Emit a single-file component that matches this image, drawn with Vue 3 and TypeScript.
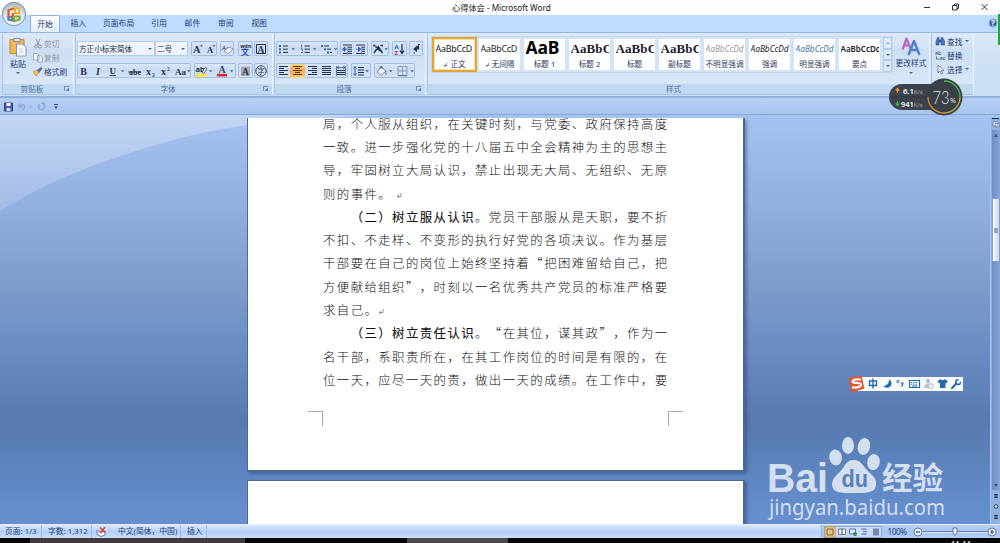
<script setup lang="ts">
import { h } from 'vue'

interface Shape {
  d?: string
  f?: string
  s?: string
  w?: number
  t?: string
  x?: number
  y?: number
  size?: number
  bold?: boolean
  italic?: boolean
  serif?: boolean
  under?: boolean
}
interface Tool { w: number; shapes: Shape[]; active?: boolean }
interface Box { gap: number; tools: Tool[] }

const ink = '#26324f'
const blue = '#3a66a8'

const Glyph = (props: { w: number; h: number; shapes: Shape[] }) =>
  h('svg', { width: props.w, height: props.h, viewBox: `0 0 ${props.w} ${props.h}` },
    props.shapes.map(p => p.t !== undefined
      ? h('text', {
          x: p.x, y: p.y, fill: p.f ?? ink, 'font-size': p.size ?? 9,
          'font-weight': p.bold ? 700 : 400,
          'font-style': p.italic ? 'italic' : 'normal',
          'text-decoration': p.under ? 'underline' : 'none',
          'font-family': p.serif ? '"Liberation Serif", serif' : '"Noto Sans", "Noto Sans CJK SC", sans-serif'
        }, p.t)
      : h('path', { d: p.d, fill: p.f ?? 'none', stroke: p.s ?? 'none', 'stroke-width': p.w ?? 1 })))
Glyph.props = ['w', 'h', 'shapes']

const drop = (x: number): Shape => ({ d: `M${x} 6.2h3.4l-1.7 2z`, f: '#4a5f8c' })
const T = (t: string, x: number, y: number, size: number, o: Partial<Shape> = {}): Shape => ({ t, x, y, size, ...o })
const lines = (x1: number, x2: number, ys: number[], s = ink): Shape =>
  ({ d: ys.map(y => `M${x1} ${y}H${x2}`).join(''), s })

const fontRow1: Box[] = [
  { gap: 3, tools: [
    { w: 13, shapes: [T('A', 2, 11, 10.5, { bold: true, serif: true }), { d: 'M9 4.5l1.5-2 1.5 2z', f: blue }] },
    { w: 13, shapes: [T('A', 3, 11, 8.5, { bold: true, serif: true }), { d: 'M8.5 3h3l-1.5 2z', f: blue }] }
  ] },
  { gap: 4, tools: [{ w: 14, shapes: [T('Aa', 1.5, 8, 7, { serif: true }), { d: 'M4 9l5-4 4 2-5 5z', f: '#f4f2f4', s: '#8088a8', w: .8 }] }] },
  { gap: 1, tools: [{ w: 15, shapes: [T('wén', 2.2, 5.5, 5.4, { bold: true }), T('文', 3, 12.8, 8, { f: '#2454b0', bold: true })] }] },
  { gap: 0, tools: [{ w: 14, shapes: [{ d: 'M2.5 2.5h9v9h-9z', s: ink }, T('A', 3.5, 10.5, 9.5, { bold: true, serif: true })] }] }
]
const fontRow2: Box[] = [
  { gap: 3, tools: [
    { w: 14, shapes: [T('B', 3.2, 10.8, 10, { bold: true, serif: true })] },
    { w: 14, shapes: [T('I', 5, 10.8, 10, { bold: true, italic: true, serif: true })] },
    { w: 21, shapes: [T('U', 4.5, 10, 9, { bold: true, serif: true, under: true }), drop(16)] },
    { w: 17, shapes: [T('abe', 3, 10.5, 8, { bold: true, serif: true }), { d: 'M2 8h13', s: ink, w: .9 }] },
    { w: 15, shapes: [T('x', 3, 10.5, 10, { bold: true, serif: true }), T('2', 9, 12.5, 5, { f: blue, bold: true })] },
    { w: 14, shapes: [T('x', 3, 10.5, 10, { bold: true, serif: true }), T('2', 9, 6.5, 5, { f: blue, bold: true })] },
    { w: 19, shapes: [T('Aa', 3, 10.8, 9, { bold: true, serif: true }), drop(15)] }
  ] },
  { gap: 2, tools: [
    { w: 21, shapes: [T('ab', 1.5, 8, 7.5, { bold: true }), { d: 'M8 8.5l3-5 2 1-3 5z', f: '#f4f4f4', s: ink, w: .7 }, { d: 'M2 9.7h10v3h-10z', f: '#f7e92e' }, drop(15)] },
    { w: 21, shapes: [T('A', 3.5, 9.3, 10, { bold: true, serif: true, f: '#28477e' }), { d: 'M2 9.9h10v2.5h-10z', f: '#e01f2a' }, drop(15)] }
  ] },
  { gap: 1, tools: [{ w: 15, shapes: [{ d: 'M3 2.5h9v9.5h-9z', f: '#a9a9ae' }, T('A', 4, 10.5, 9.5, { bold: true, serif: true })] }] },
  { gap: 0, tools: [{ w: 14, shapes: [{ d: 'M7 1.8a5.2 5.2 0 1 0 .01 0', s: ink, w: .9 }, T('字', 3.3, 10, 7.5)] }] }
]
const bullets: Shape[] = [{ d: 'M3 3h2v2h-2zM3 6.2h2v2h-2zM3 9.4h2v2h-2z', f: '#3968ad' }, lines(7, 12, [4, 7.2, 10.4])]
const paraRow1: Box[] = [
  { gap: 2, tools: [
    { w: 21, shapes: [...bullets, drop(15.5)] },
    { w: 21, shapes: [{ d: 'M4.5 2.5v3M4 6.5h1v2h1M4 10.5h2', s: '#3968ad', w: .9 }, lines(7.5, 13, [4, 7.2, 10.4]), drop(16)] },
    { w: 20, shapes: [{ d: 'M3 3h2v2h-2zM6 6.2h2v2h-2zM9 9.4h2v2h-2z', f: '#3968ad' }, lines(6, 11, [4]), lines(9, 13, [7.2]), lines(12, 14, [10.4]), drop(16)] }
  ] },
  { gap: 3, tools: [
    { w: 14, shapes: [lines(3, 12, [3, 11.5]), lines(8, 12, [5.2, 7.3, 9.4]), { d: 'M7 7.2H3.5M5 5l-2.5 2.2 2.5 2.3z', s: '#2e62ae', f: '#2e62ae', w: .8 }, { d: 'M7.5 2v11', s: '#7b8eb5', w: .7 }] },
    { w: 14, shapes: [lines(2, 11, [3, 11.5]), lines(8, 11, [5.2, 7.3, 9.4]), { d: 'M2 7.2h3.5M4.5 5l2.5 2.2-2.5 2.3z', s: '#2e62ae', f: '#2e62ae', w: .8 }, { d: 'M7.5 2v11', s: '#7b8eb5', w: .7 }] }
  ] },
  { gap: 3, tools: [{ w: 18, shapes: [{ d: 'M2 3.5h2.5M9.5 3.5h2.5M3 11L7.2 4.500 11.500 11M4.500 4.500l5 4.500', s: ink, w: 1.5 }, drop(13.5)] }] },
  { gap: 2, tools: [{ w: 15, shapes: [T('A', 2.5, 6.8, 6, { bold: true, f: '#2e62ae' }), T('Z', 2.5, 13, 6, { bold: true, f: '#a33846' }), { d: 'M10 2v9M8 8.7l2 3 2-3', s: ink, w: 1.2 }] }] },
  { gap: 0, tools: [{ w: 14, shapes: [{ d: 'M9.500 3v4H5.500M7.500 5L5 7l2.500 2z', s: ink, f: ink, w: 1.1 }, { d: 'M9 2.500h2M4.500 11h1.500', s: ink, w: 1.2 }] }] }
]
const ys = [2.5, 4.5, 6.5, 8.5, 10.5]
const paraRow2: Box[] = [
  { gap: 3, tools: [
    { w: 14, shapes: [lines(3, 12, [2.5, 6.5, 10.5]), lines(3, 8, [4.5, 8.5])] },
    { w: 15, active: true, shapes: [lines(3, 12, [2.5, 6.5, 10.5], '#5c3a18'), lines(5, 10, [4.5, 8.5], '#5c3a18')] },
    { w: 14, shapes: [lines(3, 12, [2.5, 6.5, 10.5]), lines(7, 12, [4.5, 8.5])] },
    { w: 15, shapes: [lines(3, 12, ys)] },
    { w: 14, shapes: [lines(3, 11, [6.5, 8.5, 10.5]), { d: 'M2.5 2v10M11.5 2v10M3 3.5h8M5 2l-2 1.5 2 1.5M9 2l2 1.5-2 1.5', s: '#385d9c', w: .8 }] }
  ] },
  { gap: 3, tools: [{ w: 20, shapes: [{ d: 'M4 2.5v9M2.5 4.5L4 2.5l1.5 2M2.5 9.5L4 11.5l1.5-2', s: '#2e62ae' }, lines(7, 13, [3.5, 6, 8.5, 11]), drop(14.5)] }] },
  { gap: 0, tools: [
    { w: 21, shapes: [{ d: 'M3 8l4-5 5 4-5 4.5z', f: '#f3f5f9', s: '#5b6d90', w: .8 }, { d: 'M6 5V2.5h2V5M12 7v4', s: '#5b6d90', w: .9 }, { d: 'M2 12h10v1h-10z', f: '#d9dfeb' }, drop(15)] },
    { w: 20, shapes: [{ d: 'M3 2.5h9v9h-9zM7.5 2.5v9M3 7h9', s: '#8495b8', w: .9 }, { d: 'M3 11.7h9', s: '#536894' }, drop(15.5)] }
  ] }
]

const tabs = [
  { label: '开始', active: true }, { label: '插入' }, { label: '页面布局' }, { label: '引用' },
  { label: '邮件' }, { label: '审阅' }, { label: '视图' }
]
const cards = [
  { s: 'AaBbCcD', n: '正文', mark: true, k: 'plain', active: true },
  { s: 'AaBbCcD', n: '无间隔', mark: true, k: 'plain' },
  { s: 'AaB', n: '标题 1', k: 'h1' },
  { s: 'AaBbC', n: '标题 2', k: 'h2' },
  { s: 'AaBbC', n: '标题', k: 'h2' },
  { s: 'AaBbC', n: '副标题', k: 'h2' },
  { s: 'AaBbCcDd', n: '不明显强调', k: 'subtle' },
  { s: 'AaBbCcDd', n: '强调', k: 'em' },
  { s: 'AaBbCcDd', n: '明显强调', k: 'strongem' },
  { s: 'AaBbCcDd', n: '要点', k: 'point' }
]
const doc: { b?: string; t: string; indent?: boolean; end?: boolean }[] = [
  { t: '局，个人服从组织，在关键时刻，与党委、政府保持高度' },
  { t: '一致。进一步强化党的十八届五中全会精神为主的思想主' },
  { t: '导，牢固树立大局认识，禁止出现无大局、无组织、无原' },
  { t: '则的事件。', end: true },
  { b: '（二）树立服从认识', t: '。党员干部服从是天职，要不折', indent: true },
  { t: '不扣、不走样、不变形的执行好党的各项决议。作为基层' },
  { t: '干部要在自己的岗位上始终坚持着“把困难留给自己，把' },
  { t: '方便献给组织”，时刻以一名优秀共产党员的标准严格要' },
  { t: '求自己。', end: true },
  { b: '（三）树立责任认识', t: '。“在其位，谋其政”，作为一', indent: true },
  { t: '名干部，系职责所在，在其工作岗位的时间是有限的，在' },
  { t: '位一天，应尽一天的责，做出一天的成绩。在工作中，要' }
]
</script>

<template>
  <div class="window">
    <header class="title">
      <span class="caption">心得体会 - Microsoft Word</span>
      <svg class="controls" width="76" height="15" viewBox="0 0 76 15" fill="none" stroke="#333" stroke-width="1">
        <path d="M0 7.500h6M30.500 5.500v-1.500h4v4.500h-1.500M28.500 5.500h4.500v4.500h-4.500zM57.500 4l6 6M63.500 4l-6 6" />
      </svg>
    </header>
    <svg class="orb" width="28" height="28" viewBox="0 0 28 28">
      <defs>
        <radialGradient id="orbFill" cx="50%" cy="70%" r="65%">
          <stop offset="0" stop-color="#fff" /><stop offset=".65" stop-color="#dde3ec" /><stop offset="1" stop-color="#a9b5c8" />
        </radialGradient>
      </defs>
      <circle cx="14" cy="14" r="11.700" fill="url(#orbFill)" stroke="#8794aa" />
      <g fill="none" stroke-width="2.200">
        <path d="M14 8.500L8.500 10v6.500L13 17v-4" stroke="#e0582b" />
        <path d="M15 7.500l4 1v5h-4z" stroke="#efb12e" />
        <path d="M8.500 16v3.500l4 .8v-3" stroke="#4a7fc8" />
        <path d="M15 16.500h4.500v3L14 21v-5" stroke="#79ab3d" />
      </g>
    </svg>

    <nav class="tabs">
      <span v-for="t in tabs" :key="t.label" class="tab" :class="{ active: t.active, wide: t.label.length > 2 }">{{ t.label }}</span>
      <svg class="help" width="10" height="12" viewBox="0 0 10 12">
        <circle cx="5" cy="6" r="4" fill="#3568b9" stroke="#89a9d8" />
        <text x="3" y="9" font-size="8" font-weight="700" fill="#fff" font-family="Noto Sans">?</text>
      </svg>
    </nav>

    <section class="ribbon">
      <div class="group clipboard">
        <div class="body clip-body">
          <div class="paste">
            <svg width="20" height="22" viewBox="0 0 20 22">
              <path d="M2 3.500h14v14H2z" fill="#efb956" stroke="#ba8538" />
              <path d="M6 2.500h6v3H6z" fill="#e6e9f0" stroke="#7e8594" />
              <path d="M8.500 8h6l3.500 3.500v8.500H8.500z" fill="#fff" stroke="#7e90b5" />
              <path d="M10.500 13h5M10.500 15h5M10.500 17h5" stroke="#b4c2dc" stroke-width=".8" />
            </svg>
            <span>粘贴</span><i class="caret" />
          </div>
          <div class="clip-list">
            <div class="row dim">
              <svg width="10" height="11" viewBox="0 0 10 11"><path d="M3 1l3 6M7 1L4 7" stroke="#8793ab" fill="none" /><circle cx="3" cy="8.500" r="1.500" fill="none" stroke="#8793ab" /><circle cx="7" cy="8.500" r="1.500" fill="none" stroke="#8793ab" /></svg>剪切
            </div>
            <div class="row dim">
              <svg width="10" height="11" viewBox="0 0 10 11"><path d="M.5 1.500h4l1.500 1.500v5H.5zM4.500 3.500h3l2 2v4.500h-5z" fill="#f2f5fa" stroke="#9caac4" /></svg>复制
            </div>
            <div class="row">
              <svg width="10" height="11" viewBox="0 0 10 11"><path d="M0 6l4-2 2 3-3 3z" fill="#f0c25a" stroke="#ad8631" stroke-width=".6" /><path d="M4 4l4-3 1.500 1.500L6 7z" fill="#596b92" /></svg>格式刷
            </div>
          </div>
        </div>
        <div class="label">剪贴板<i class="launch" /></div>
      </div>

      <div class="group font">
        <div class="body">
          <div class="tools first">
            <span class="combo family">方正小标宋简体<i class="caret" /></span>
            <span class="combo size">二号<i class="caret" /></span>
            <span v-for="(b, i) in fontRow1" :key="i" class="box" :class="'gap' + b.gap">
              <Glyph v-for="(t, j) in b.tools" :key="j" class="tool" :w="t.w" :h="14" :shapes="t.shapes" />
            </span>
          </div>
          <div class="tools">
            <span v-for="(b, i) in fontRow2" :key="i" class="box" :class="'gap' + b.gap">
              <Glyph v-for="(t, j) in b.tools" :key="j" class="tool" :w="t.w" :h="14" :shapes="t.shapes" />
            </span>
          </div>
        </div>
        <div class="label">字体<i class="launch" /></div>
      </div>

      <div class="group para">
        <div class="body">
          <div v-for="(r, k) in [paraRow1, paraRow2]" :key="k" class="tools" :class="{ first: k === 0 }">
            <span v-for="(b, i) in r" :key="i" class="box" :class="'gap' + b.gap">
              <Glyph v-for="(t, j) in b.tools" :key="j" class="tool" :class="{ on: t.active }" :w="t.w" :h="14" :shapes="t.shapes" />
            </span>
          </div>
        </div>
        <div class="label">段落<i class="launch" /></div>
      </div>

      <div class="group styles">
        <div class="body style-body">
          <div class="gallery">
            <div v-for="(c, i) in cards" :key="i" class="card" :class="[c.k, { active: c.active }]">
              <span class="sample">{{ c.s }}</span>
              <span class="name"><small v-if="c.mark">↲</small>{{ c.n }}</span>
            </div>
            <div class="scroller"><span><i class="caret up" /></span><span><i class="caret" /></span><span><i class="caret more" /></span></div>
          </div>
          <div class="change">
            <svg width="22" height="22" viewBox="0 0 22 22" fill="none" stroke-linejoin="round">
              <path d="M2.500 13.500L6.500 2.500l4.500 11M4 9.500h5.500" stroke="#b866c4" stroke-width="2.200" />
              <path d="M8.500 19L14 5l5.500 14M10.500 14h7" stroke="#4d80c9" stroke-width="2.400" />
            </svg>
            <span>更改样式</span><i class="caret" />
          </div>
        </div>
        <div class="label style-label">样式</div>
      </div>

      <div class="group edit">
        <div class="body edit-body">
          <div class="row">
            <svg width="11" height="11" viewBox="0 0 11 11"><path d="M1 9V5l1.500-3.500H4V9zM6 9V1.500h1.500L9.500 5v4zM4 4h2v2H4z" fill="#4773b4" stroke="#2b5392" stroke-width=".6" /></svg>查找<i class="caret" />
          </div>
          <div class="row">
            <svg width="11" height="11" viewBox="0 0 11 11"><text x="0" y="5" font-size="5.500" fill="#354464" font-family="Noto Sans">ab</text><text x="4.500" y="10.300" font-size="5.500" font-weight="700" fill="#2f8561" font-family="Noto Sans">ac</text><path d="M1.500 6.500v2.500H4" fill="none" stroke="#4773b4" /></svg>替换
          </div>
          <div class="row">
            <svg width="11" height="11" viewBox="0 0 11 11"><path d="M3 1v8l2-2 1.500 3 1.200-.6L6.300 6.600H9z" fill="#fff" stroke="#5a6b8d" stroke-width=".8" /></svg>选择<i class="caret" />
          </div>
        </div>
        <div class="label" />
      </div>
    </section>

    <div class="quick">
      <svg width="60" height="12" viewBox="0 0 60 12" fill="none">
        <path d="M.5 2h8v8h-8z" fill="#4d57b5" stroke="#2f3a8c" /><path d="M2.500 2h4v3h-4z" fill="#fff" /><path d="M2.500 7h4v3h-4z" fill="#d6dcf0" />
        <path d="M15 2.500v3.500h3.500M15.500 5.500c2-3 6-2 5 1.500l-2 2" stroke="#8fa5cf" stroke-width="1.400" /><path d="M25 5.500h3l-1.500 2z" fill="#8fa5cf" />
        <path d="M35.500 3.500a3 3 0 1 0 4 0M37 2.500h3.500v3" stroke="#8fa5cf" stroke-width="1.400" />
        <path d="M50 3.500h4" stroke="#344a7c" /><path d="M49.800 5.500h4.400l-2.200 2.200z" fill="#344a7c" />
      </svg>
    </div>

    <main class="work">
      <svg class="sheen" width="420" height="100" viewBox="0 0 420 100">
        <defs>
          <linearGradient id="sheenFill" x1="0" y1="0" x2="0" y2="1">
            <stop offset="0" stop-color="#fff" stop-opacity=".32" /><stop offset="1" stop-color="#fff" stop-opacity=".16" />
          </linearGradient>
        </defs>
        <path d="M0 0H400C290 2 220 11 170 26 100 45 45 68 0 96z" fill="url(#sheenFill)" />
      </svg>
      <div class="pages">
        <article class="page">
          <p v-for="(l, i) in doc" :key="i" :class="{ indent: l.indent }"><b v-if="l.b">{{ l.b }}</b>{{ l.t }}<svg v-if="l.end" class="ret" :class="{ far: i === 3 }" width="6" height="7" viewBox="0 0 6 7"><path d="M5 0v3.500H1.500M3 2L1.200 3.500 3 5" fill="none" stroke="#777" stroke-width=".8" /></svg></p>
          <div class="corners"><i class="corner left" /><i class="corner right" /></div>
        </article>
        <article class="page next" />
      </div>
      <div class="vbar">
        <i class="split" />
        <svg width="8" height="8" viewBox="0 0 8 8"><path d="M1 2h5v4H1zM3 3.500h4.500V7H3z" fill="#e8eef8" stroke="#7082a6" stroke-width=".8" /></svg>
        <div class="track">
          <i class="arrow up" /><div class="thumb"><i /></div><i class="arrow down" />
        </div>
        <svg width="8" height="34" viewBox="0 0 8 34"><path d="M2.300 4h3.400v1.500H2.300zM2.300 6.500h3.400v1.500H2.300zM2.300 25h3.400v1.500H2.300zM2.300 27.500h3.400v1.500H2.300z" fill="#1d2946" /><circle cx="4" cy="16.500" r="1.800" fill="#dfe7f5" stroke="#2d3957" /></svg>
      </div>

      <div class="ime">
        <svg width="116" height="18" viewBox="0 0 116 18" fill="none">
          <path d="M9 2h106v14H9z" fill="#f9fbfe" />
          <path d="M1.500 3.500L13 1.500l2.500 11.500L4 16.500z" fill="#e5552c" stroke="#e5552c" stroke-width="1.500" stroke-linejoin="round" />
          <path d="M13 4.800C8.500 3.500 4 4.800 4.700 6.900 5.500 8.500 12.500 7.300 13 9.500c.4 2.500-5 3.700-9 2.600" stroke="#fff" stroke-width="2.200" />
          <path d="M21.500 6h7v4.500h-7zM25 3.500v10" stroke="#2269b3" stroke-width="1.400" />
          <path d="M41 4.500c0 4-2 6-5.500 6.500 3 3.500 8 1.500 8-2.500 0-2-1-3.200-2.500-4z" fill="#2269b3" />
          <circle cx="50" cy="6.500" r="1.200" stroke="#2269b3" stroke-width=".9" /><path d="M53.200 8.300a1.200 1.200 0 1 1 2.200.8l-1.200 3h-1l.6-2.300z" fill="#2269b3" />
          <path d="M61.500 5.500h10v7h-10z" stroke="#2269b3" stroke-width="1.200" /><path d="M63 7.500h7M63 9.200h7" stroke="#2269b3" stroke-dasharray="1 .8" /><path d="M64 11h5" stroke="#2269b3" />
          <circle cx="80" cy="6" r="2.200" fill="#b5bfd0" /><path d="M76 13c0-6 8-6 8 0z" fill="#b5bfd0" /><path d="M81 9h4v4h-4z" fill="#fff" stroke="#b5bfd0" />
          <path d="M91.500 4.500h1.800c.7 1 2.100 1 2.800 0h1.800l2 2.300-1.500 1.400-.9-.6v5.400h-5.600V7.600l-.9.6-1.500-1.400z" fill="#2269b3" />
          <path d="M104 13l4.500-4.500" stroke="#2269b3" stroke-width="2.200" stroke-linecap="round" /><path d="M110.500 4.500l-2.500 1-.3 2.500 1.500 1.500 2.500-.2 1-2.500" stroke="#2269b3" stroke-width="1.600" />
        </svg>
      </div>
      <svg class="mark" width="180" height="90" viewBox="767 433 180 90" fill="#d3deef">
        <text x="767" y="492" font-size="40.500" font-weight="700" textLength="61" lengthAdjust="spacingAndGlyphs" font-family="Liberation Sans">Bai</text>
        <ellipse cx="835.500" cy="457.500" rx="6.300" ry="8" transform="rotate(-8 835 457)" />
        <ellipse cx="848" cy="445.500" rx="6" ry="8.500" />
        <ellipse cx="864" cy="446.500" rx="6.200" ry="8.500" transform="rotate(12 864 446)" />
        <ellipse cx="873.500" cy="462" rx="6.300" ry="8" transform="rotate(10 873 462)" />
        <path d="M854 460c6 0 8 4 12 9 5 6 11 8 10 16-1 8-8 8-22 8s-21 0-22-8c0-8 6-10 11-17 3-5 5-8 11-8z" />
        <text x="841.500" y="487" font-size="24" font-weight="700" fill="#567fbb" textLength="26.500" lengthAdjust="spacingAndGlyphs" font-family="Liberation Sans">du</text>
        <text x="882" y="488.500" font-size="30.500" font-weight="700" textLength="61" font-family="Noto Sans CJK SC">经验</text>
        <text x="769" y="515" font-size="21.500" textLength="176" lengthAdjust="spacingAndGlyphs" font-family="Noto Sans">jingyan.baidu.com</text>
      </svg>
    </main>

    <footer class="status">
      <span class="s1">页面: 1/3</span><span class="s2">字数: 1,312</span>
      <span class="s3"><svg width="11" height="11" viewBox="0 0 11 11"><path d="M1 4.500l4 1.500 4-1v4L5 10.500 1 8.500z" fill="#f0f4fb" stroke="#52688f" stroke-width=".8" /><path d="M4 1.500l5 5M9 1L4.500 7" stroke="#d8402f" stroke-width="1.500" /></svg></span>
      <span class="s4">中文(简体，中国)</span><span class="s5">插入</span>
      <svg class="views" width="179" height="14" viewBox="-3 0 179 14" fill="none">
        <path d="M-2.500 0v14" stroke="#8fb0e2" /><path d="M-2 0h178v14H-2z" fill="#9fbfee" fill-opacity=".6" />
        <path d="M.5 1.500h57v11H.5z" fill="#c7daf6" stroke="#8aa9d9" /><path d="M1 2h10v10H1z" fill="#f8d68c" stroke="#c79a4e" />
        <path d="M3 4h6v6H3z" fill="#e4c287" stroke="#725d3d" /><path d="M14.500 4H18v5.500h-3.500zM18 4h3.500v5.500H18z" fill="#fff" stroke="#687895" />
        <path d="M25.500 4h6v5h-6z" fill="#dce8f8" stroke="#54719c" /><circle cx="31" cy="9" r="2" fill="#39825b" />
        <path d="M37.500 4h5M39 6.500h4M37.500 9h5" stroke="#7690ba" stroke-width="1.300" /><path d="M49 3.500h6v7h-6z" fill="#7288b0" />
        <text x="63.500" y="10" font-size="8.200" fill="#24427c" font-family="Noto Sans" textLength="19.500">100%</text>
        <circle cx="94" cy="7" r="4" fill="#eaf1fc" stroke="#667c9f" /><path d="M92 7h4" stroke="#34496f" stroke-width="1.200" />
        <path d="M99 6.500h65" stroke="#6080b5" /><path d="M99 7.500h65" stroke="#d8e6fb" />
        <path d="M129 3h4v5l-2 2.500-2-2.500z" fill="#eef4fd" stroke="#617799" /><circle cx="168" cy="7" r="4" stroke="#667c9f" fill="#eaf1fc" />
        <path d="M166 7h4M168 5v4" stroke="#34496f" stroke-width="1.200" />
      </svg>
    </footer>
    <div class="taskbar"><i class="app" /><i class="app second" /><span class="clock">11:11</span></div>

    <i class="greenbar" />
    <svg class="meter" width="76" height="40" viewBox="0 0 76 40" font-family="Noto Sans">
      <path d="M13 7h42v26H13a13 13 0 0 1 0-26z" fill="#3d434c" />
      <path d="M1 20h36" stroke="#30353c" />
      <path d="M8.500 16v-4M6.700 13.500l1.800-2 1.800 2" fill="none" stroke="#f08a2c" stroke-width="1.200" />
      <path d="M8.500 24v4M6.700 26.500l1.800 2 1.800-2" fill="none" stroke="#41b649" stroke-width="1.200" />
      <text x="14" y="17" font-size="7.600" font-weight="600" fill="#fff">6.1<tspan font-size="6" font-weight="400" fill="#a5adb8">K/s</tspan></text>
      <text x="12" y="30" font-size="7.400" font-weight="600" fill="#fff">941<tspan font-size="6" font-weight="400" fill="#a5adb8">K/s</tspan></text>
      <circle cx="55" cy="20" r="18.500" fill="#3a4048" />
      <path d="M55 4a16 16 0 0 1 16 16" fill="none" stroke="#46b749" stroke-width="1.300" />
      <path d="M71 20a16 16 0 0 1-16 16" fill="none" stroke="#b5a83d" stroke-width="1.300" />
      <path d="M55 36a16 16 0 0 1-16-16" fill="none" stroke="#e08a34" stroke-width="1.300" />
      <text x="43.500" y="26.500" font-size="18.500" fill="#e4e7eb" font-family="Lato" font-weight="300" textLength="17" lengthAdjust="spacingAndGlyphs">73</text>
      <text x="61" y="26" font-size="7" fill="#e4e7eb">%</text>
    </svg>
  </div>
</template>

<style>
html, body { margin: 0; overflow: hidden; }
</style>

<style scoped>
.window { position: relative; width: 1000px; height: 543px; overflow: hidden; display: flex; flex-direction: column; font: 8px "Noto Sans", "Noto Sans CJK SC", sans-serif; color: #1f3c78; }
.window * { box-sizing: border-box; }
svg { display: block; flex: none; }
i { display: block; }
.title { height: 15px; flex: none; background: #fefefe; display: flex; align-items: center; padding-left: 452px; color: #222; }
.caption { font-size: 8.200px; line-height: 15px; white-space: nowrap; width: 100px; }
.controls { margin-left: 372px; }
.orb { position: absolute; left: 0; top: 0; z-index: 3; }
.tabs { height: 17px; flex: none; background: #bfdbff; display: flex; padding-left: 30px; }
.tab { width: 30px; height: 17px; line-height: 17px; text-align: center; margin-right: 3.300px; font-size: 7.800px; white-space: nowrap; }
.tab.wide { width: 48px; margin-left: -2px; margin-right: 1.500px; }
.tab.active { background: linear-gradient(#fff, #e3eefb); border: 1px solid #8fb2e0; border-bottom: 0; border-radius: 2px 2px 0 0; line-height: 16px; }
.help { margin-left: auto; margin-right: 2px; margin-top: 2px; }

.ribbon { height: 66px; flex: none; background: linear-gradient(#dce8f6, #d2e2f5 30%, #c9def6); border-top: 1px solid #92b4e2; border-bottom: 2px solid #8fb0dd; padding: 0 0 1px 2px; display: flex; gap: 1px; }
.group { display: flex; flex-direction: column; border: 1px solid #a9c5e8; border-top: 0; border-right-color: #eef5fd; border-radius: 2px; background: linear-gradient(#dde8f5, #d3e2f4 25%, #ccdef3 26%, #dbe8f8); }
.clipboard { width: 72px; } .font { width: 198px; } .para { width: 152px; } .styles { width: 503px; } .edit { width: 43px; }
.body { height: 51px; flex: none; padding: 8px 0 0 1px; }
.label { flex: 1; background: #c1d8f1; color: #4d70a6; display: flex; justify-content: center; align-items: center; font-size: 7.600px; line-height: 10px; position: relative; padding-right: 12px; }
.style-label { padding-right: 10px; }
.launch { position: absolute; right: 4px; top: 2px; width: 5px; height: 5px; border-left: 1px solid #7590b8; border-top: 1px solid #7590b8; background: linear-gradient(135deg, transparent 55%, #6681ae 56%); }
.caret { width: 0; height: 0; border: 2px solid transparent; border-top-color: #4a5f8c; border-bottom: 0; }
.clip-body { display: flex; padding: 3px 0 0 3px; }
.paste { width: 24px; display: flex; flex-direction: column; align-items: center; font-size: 8px; line-height: 11px; }
.paste span { margin-top: -.5px; } .paste .caret { margin-top: 3px; }
.clip-list { margin-left: 3px; }
.row { display: flex; align-items: center; gap: 1px; height: 14px; font-size: 7.700px; white-space: nowrap; }
.row.dim { color: #8f97a5; }
.row .caret { margin-left: 2px; }
.tools { display: flex; height: 15px; }
.tools.first { margin-bottom: 7px; }
.combo { height: 15px; background: #edf4fd; border: 1px solid #b4cbea; display: flex; align-items: center; justify-content: space-between; padding: 0 2px 0 1px; font-size: 7.600px; color: #1c2640; white-space: nowrap; }
.family { width: 78px; } .size { width: 33px; margin-right: 3px; }
.box { display: flex; height: 15px; box-shadow: inset 0 0 0 1px #a3bde2; border-radius: 2px; background: linear-gradient(#dae7f8, #c9dbf2 50%, #d7e5f7); }
.box .tool { margin-top: .5px; }
.gap1 { margin-right: 1px; } .gap2 { margin-right: 2px; } .gap3 { margin-right: 3px; } .gap4 { margin-right: 4px; }
.tool.on { background: linear-gradient(#fcd28c, #f9a94a 50%, #fcd47e); }
.style-body { display: flex; padding: 3px 0 0 3px; }
.gallery { display: flex; width: 462px; height: 37px; background: #d3e4f8; border: 1px solid #c2d7f0; }
.card { width: 45px; flex: none; border: 2px solid #d3e4f8; background: #fff; display: flex; flex-direction: column; align-items: center; overflow: hidden; color: #1d1d28; }
.card.active { border-color: #e5a534; box-shadow: inset 0 0 0 1px #fbe3a4; }
.sample { height: 20px; line-height: 19px; width: 38px; overflow: hidden; white-space: nowrap; font-size: 8.900px; }
.name { font-size: 7.600px; line-height: 10px; color: #27345c; white-space: nowrap; }
.name small { font-size: 5.500px; margin-right: 2px; }
.plain .sample { letter-spacing: -.25px; }
.h1 .sample { font: 700 17.500px/17px "Noto Sans", sans-serif; color: #000; letter-spacing: -.2px; }
.h2 .sample { font: 700 13px/20px "Liberation Serif", serif; letter-spacing: .1px; }
.subtle .sample, .em .sample, .strongem .sample { font-style: italic; font-size: 8.300px; }
.subtle .sample { color: #999; } .strongem .sample { color: #4679ad; }
.point .sample { font-weight: 600; font-size: 8px; }
.scroller { margin-left: auto; width: 9px; display: flex; flex-direction: column; }
.scroller span { flex: 1; border: 1px solid #b3cae9; background: #dce9f9; display: grid; place-items: center; }
.up { transform: rotate(180deg); opacity: .4; }
.change { width: 36px; display: flex; flex-direction: column; align-items: center; font-size: 7.700px; line-height: 11px; white-space: nowrap; }
.change .caret { margin-top: 3px; }
.edit-body { padding: 1px 0 0 3px; }

.quick { height: 17px; flex: none; background: linear-gradient(#b5cff4, #a9c5ee); border-bottom: 1px solid #83a8da; padding: 3px 0 0 4px; }
.work { position: relative; height: 409px; flex: none; display: flex; padding-top: 3px; background: linear-gradient(#a5c3f0 0, #9bb9e8 12%, #7a9aca 44%, #6689c2 60%, #567ab0 75%, #6690d0); }
.sheen { position: absolute; left: 0; top: 0; }
.pages { position: relative; width: 504px; padding-right: 6px; margin-left: 247px; overflow: hidden; }
.page { width: 498px; height: 354px; border: 1px solid #4e6895; border-top: 0; border-right-width: 2px; border-bottom-width: 2px; background: #fff; overflow: hidden; box-shadow: 2px 2px 3px rgba(30, 50, 90, .4); }
.page p { margin: 0 0 0 75px; height: 23.320px; line-height: 23.320px; font-family: "Noto Sans CJK SC", sans-serif; font-weight: 300; font-size: 12.400px; letter-spacing: 1.430px; color: #111; white-space: nowrap; font-kerning: none; text-spacing-trim: space-all; display: flex; align-items: center; }
.page p:first-child { margin-top: -5.400px; }
.page p.indent { padding-left: 27.660px; }
.page b { font-weight: 400; -webkit-text-stroke: .1px #111; }
.ret { margin-top: 4px; } .ret.far { margin-left: 4px; }
.corners { display: flex; justify-content: space-between; padding: 18.400px 60px 0; }
.corner { width: 15px; height: 15px; border-top: 1px solid #aaa; }
.left { border-right: 1px solid #aaa; } .right { border-left: 1px solid #aaa; }
.page.next { margin-top: 8px; border-top: 1px solid #4e6895; }
.vbar { margin-left: auto; width: 10px; border-left: 1px solid #a8c4ec; display: flex; flex-direction: column; align-items: center; background: #8fb0df; }
.split { width: 7px; height: 1px; background: #1d2b4a; margin: 0 0 1px; }
.track { width: 8px; flex: 1; margin-top: 2px; background: linear-gradient(90deg, #6c8dc3, #87a5d5); display: flex; flex-direction: column; align-items: center; }
.arrow { border: 2.500px solid transparent; }
.arrow.up { border-bottom: 3px solid #34507f; border-top: 0; transform: none; opacity: 1; margin-top: 4px; }
.arrow.down { border-top: 3px solid #34507f; border-bottom: 0; margin: auto 0 3px; }
.thumb { width: 8px; height: 64px; margin-top: 61px; background: linear-gradient(90deg, #fff, #c4d3ea); border: 1px solid #8a9fc5; display: grid; place-items: center; }
.thumb i { width: 4px; height: 5px; background: #97a4bd; }
.ime { position: absolute; left: 848px; top: 260px; }
.mark { position: absolute; left: 767px; top: 318px; }

.status { height: 14px; flex: none; display: flex; background: linear-gradient(#dbe8fc, #bdd6fa 40%, #b0cdf6 50%, #cfe0fb); border-top: 1px solid #e5effd; font-size: 7.800px; line-height: 13px; white-space: nowrap; }
.status span { border-right: 1px solid #9dbbe6; height: 13px; }
.s1 { width: 42px; padding-left: 5px; } .s2 { width: 50px; padding-left: 6px; } .status .s3 { width: 20px; padding: 1px 0 0 4px; border-right: 0; } .s4 { width: 69px; padding-left: 6px; } .s5 { width: 26px; padding-left: 6px; }
.views { margin-left: auto; }
.taskbar { height: 5px; flex: none; background: #050505; display: flex; overflow: hidden; }
.app { width: 215px; margin-left: 30px; background: #403c3d; }
.app.second { width: 101px; margin-left: 162px; background: #4a4a4c; }
.clock { margin-left: 443px; margin-top: 3px; font-size: 8px; line-height: 8px; color: #fff; }
.greenbar { position: absolute; right: 0; top: 14px; width: 2px; height: 31px; background: #10b32a; }
.meter { position: absolute; left: 889px; top: 77px; z-index: 5; }
</style>
